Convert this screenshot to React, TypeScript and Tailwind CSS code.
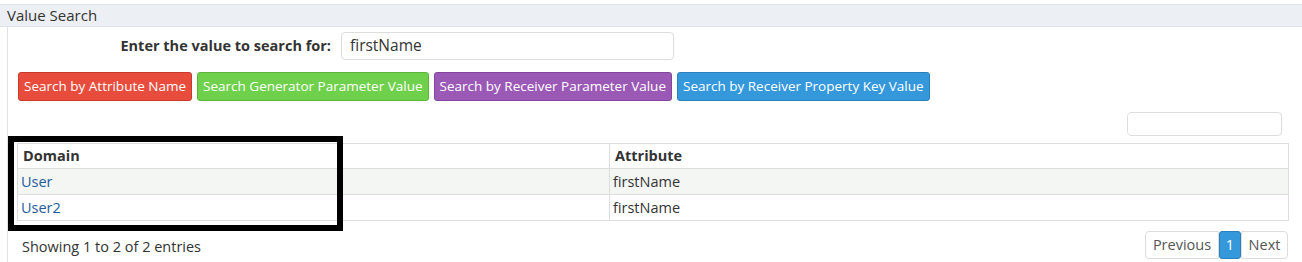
import React from "react";

const buttons = [
  { label: "Search by Attribute Name", cls: "bg-[#e74c3c] border-[#c93a2b]" },
  { label: "Search Generator Parameter Value", cls: "bg-[#6fd04b] border-[#5bb53a]" },
  { label: "Search by Receiver Parameter Value", cls: "bg-[#9b59b6] border-[#8445a0]" },
  { label: "Search by Receiver Property Key Value", cls: "bg-[#3498db] border-[#2a80bd]" },
];

const rows = [
  { domain: "User", attribute: "firstName" },
  { domain: "User2", attribute: "firstName" },
];

export default function App() {
  return (
    <div className="relative w-[1302px] h-[262px] overflow-hidden bg-white font-['Open_Sans',sans-serif] text-[#333]">
      {/* Panel heading */}
      <div className="mt-[4px] h-[23px] border-y border-[#dfe3e8] bg-[#eceff4] pl-[7px] text-[15px] leading-[20px]">
        Value Search
      </div>

      {/* Panel body */}
      <div className="ml-[7px] h-[235px] border-l border-[#dfe3e8] pl-[1px]">
        <div className="flex items-center pt-[5px]">
          <label className="w-[322px] text-right text-[14.5px] font-bold">Enter the value to search for:</label>
          <div className="ml-[10px] flex h-[28px] w-[333px] items-center rounded-[4px] border border-[#ddd] px-[8px] text-[15.5px]">
            firstName
          </div>
        </div>

        <div className="mt-[12px] flex gap-[5px] pl-[9px]">
          {buttons.map((b) => (
            <button
              key={b.label}
              className={`h-[29px] rounded-[3px] border px-[5px] text-[13.5px] text-white ${b.cls}`}
            >
              {b.label}
            </button>
          ))}
        </div>

        <div className="mt-[11px] flex justify-end pr-[20px]">
          <div className="h-[24px] w-[155px] rounded-[4px] border border-[#ddd]" />
        </div>

        <table className="ml-[8px] mt-[7px] w-[1272px] border-collapse text-[14.5px]">
          <thead>
            <tr className="h-[25px]">
              <th className="w-[592px] border border-[#ddd] pl-[5px] text-left font-bold">Domain</th>
              <th className="border border-[#ddd] pl-[5px] text-left font-bold">Attribute</th>
            </tr>
          </thead>
          <tbody>
            {rows.map((r, i) => (
              <tr key={r.domain} className={`h-[26px] ${i === 0 ? "bg-[#f3f6f3]" : "bg-white"}`}>
                <td className="border border-[#ddd] pl-[3px] text-[#1d5c9c]">{r.domain}</td>
                <td className="border border-[#ddd] pl-[3px]">{r.attribute}</td>
              </tr>
            ))}
          </tbody>
        </table>

        <div className="mt-[10px] flex items-center justify-between pl-[13px] pr-[14px]">
          <span className="pt-[4px] text-[14.5px]">Showing 1 to 2 of 2 entries</span>
          <div className="flex h-[28px] text-[14.5px] text-[#555]">
            <span className="flex w-[74px] items-center justify-center rounded-l-[4px] border border-[#ddd]">Previous</span>
            <span className="flex w-[22px] items-center justify-center rounded-[3px] border border-[#2a80bd] bg-[#3498db] text-white">1</span>
            <span className="flex w-[47px] items-center justify-center rounded-r-[4px] border border-[#ddd]">Next</span>
          </div>
        </div>
      </div>

      {/* Annotation box */}
      <div className="absolute left-[8px] top-[136px] h-[95px] w-[335px] border-[6px] border-black" />
    </div>
  );
}
